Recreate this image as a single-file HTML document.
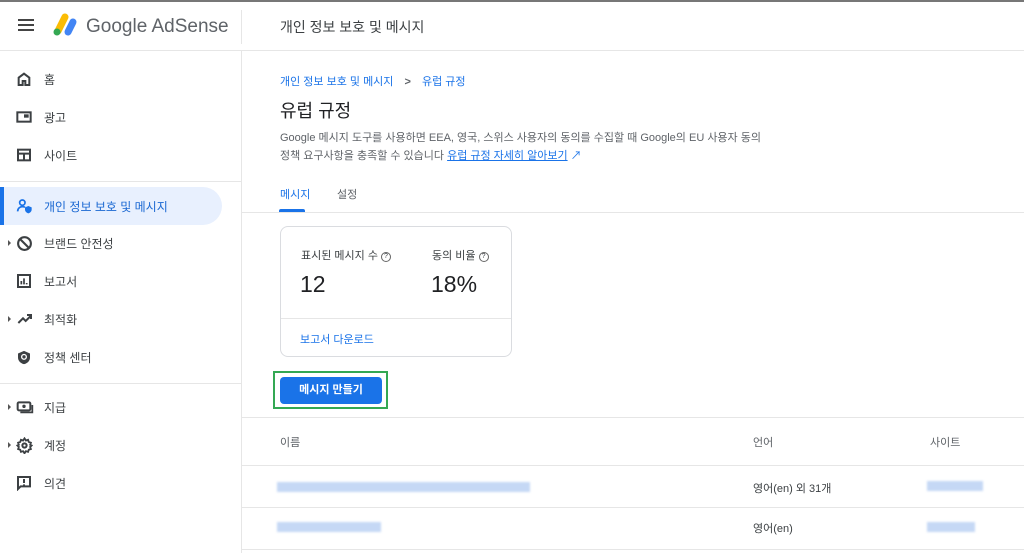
<!DOCTYPE html>
<html><head><meta charset="utf-8"><style>
*{box-sizing:border-box;margin:0;padding:0}
body{width:1024px;height:553px;overflow:hidden;background:#fff;font-family:"Liberation Sans","Noto Sans CJK KR",sans-serif;color:#3c4043;position:relative}
.abs{position:absolute}
.top{left:0;top:0;width:1024px;height:51px;border-top:2px solid #777;border-bottom:1px solid #e6e6e6;background:#fff}
.side{left:0;top:51px;width:242px;height:502px;border-right:1px solid #e6e6e6;background:#fff}
.nav{position:absolute;left:0;width:242px;height:36px;display:flex;align-items:center;font-size:12px;color:#3c4043}
.nav svg{position:absolute;left:16px}
.nav span{position:absolute;left:44px}
.caret{position:absolute;left:8px;width:0;height:0;border-left:3px solid #555;border-top:3px solid transparent;border-bottom:3px solid transparent}
.hr{position:absolute;left:0;width:241px;height:1px;background:#e6e6e6}
.main{left:242px;top:51px;width:782px;height:502px;background:#fff}
.link{color:#1a73e8}
.card{left:280px;top:226px;width:232px;height:131px;border:1px solid #dadce0;border-radius:8px;background:#fff}
.q{display:inline-block;width:10px;height:10px;border:1px solid #666;border-radius:50%;font-size:7px;line-height:8px;text-align:center;vertical-align:1px;margin-left:3px}
.line{position:absolute;left:242px;width:782px;height:1px;background:#e6e6e6}
.blur{position:absolute;height:10px;background:#c5d8f5;filter:blur(1px)}
</style></head><body>
<div class="abs top">
 <svg class="abs" style="left:18px;top:17px" width="16" height="12"><rect y="0" width="16" height="2" fill="#444"/><rect y="5" width="16" height="2" fill="#444"/><rect y="10" width="16" height="2" fill="#444"/></svg>
 <svg class="abs" style="left:51px;top:11px" width="28" height="24"><line x1="14" y1="4" x2="7" y2="18" stroke="#fbbc04" stroke-width="7" stroke-linecap="round"/><line x1="22" y1="9" x2="17" y2="19" stroke="#4285f4" stroke-width="7" stroke-linecap="round"/><circle cx="6" cy="19" r="3.5" fill="#34a853"/></svg>
 <div class="abs" style="left:86px;top:14px;font-size:19px;color:#5f6368">Google AdSense</div>
 <div class="abs" style="left:241px;top:8px;width:1px;height:34px;background:#e6e6e6"></div>
 <div class="abs" style="left:280px;top:15px;font-size:14px;color:#3c4043">개인 정보 보호 및 메시지</div>
</div>
<div class="abs side">
 <div class="nav" style="top:10px"><svg width="16" height="16" viewBox="0 0 24 24"><path d="M4 21V10l8-6 8 6v11h-6v-6h-4v6z" fill="none" stroke="#3c4043" stroke-width="3"/></svg><span>홈</span></div>
 <div class="nav" style="top:48px"><svg width="16" height="16" viewBox="0 0 24 24"><rect x="2" y="5" width="20" height="14" fill="none" stroke="#3c4043" stroke-width="3"/><rect x="12" y="8" width="7" height="5" fill="#3c4043"/></svg><span>광고</span></div>
 <div class="nav" style="top:86px"><svg width="16" height="16" viewBox="0 0 24 24"><rect x="3" y="4" width="18" height="16" fill="none" stroke="#3c4043" stroke-width="3"/><path d="M3 10h18M12 10v10" stroke="#3c4043" stroke-width="3"/></svg><span>사이트</span></div>
 <div class="hr" style="top:130px"></div>
 <div class="abs" style="left:0;top:136px;width:222px;height:38px;background:#e8f0fe;border-radius:0 19px 19px 0;border-left:4px solid #1a73e8"></div>
 <div class="nav" style="top:137px;color:#1a73e8"><svg width="18" height="16" viewBox="0 0 26 24"><circle cx="9" cy="7" r="4" fill="none" stroke="#1a73e8" stroke-width="2.6"/><path d="M2 20c0-5 4-7 7-7 2 0 3 .3 4 1" fill="none" stroke="#1a73e8" stroke-width="2.6"/><path d="M18 12l5 2v3c0 3-2 5-5 6-3-1-5-3-5-6v-3z" fill="#1a73e8"/></svg><span style="color:#1967d2">개인 정보 보호 및 메시지</span></div>
 <div class="nav" style="top:174px"><i class="caret"></i><svg width="17" height="17" viewBox="0 0 24 24"><circle cx="12" cy="12" r="9" fill="none" stroke="#3c4043" stroke-width="3"/><path d="M6 6l12 12" stroke="#3c4043" stroke-width="3"/></svg><span>브랜드 안전성</span></div>
 <div class="nav" style="top:212px"><svg width="16" height="16" viewBox="0 0 24 24"><rect x="3" y="3" width="18" height="18" fill="none" stroke="#3c4043" stroke-width="3"/><path d="M8 17v-5M12 17V8M16 17v-2" stroke="#3c4043" stroke-width="2.6"/></svg><span>보고서</span></div>
 <div class="nav" style="top:250px"><i class="caret"></i><svg width="18" height="16" viewBox="0 0 24 24"><path d="M2 18l7-7 4 4 8-8M15 6h6v6" fill="none" stroke="#3c4043" stroke-width="3"/></svg><span>최적화</span></div>
 <div class="nav" style="top:288px"><svg width="16" height="17" viewBox="0 0 24 24"><path d="M12 2l9 4v6c0 5-4 9-9 10-5-1-9-5-9-10V6z" fill="#3c4043"/><circle cx="12" cy="11" r="3.5" fill="none" stroke="#fff" stroke-width="2"/></svg><span>정책 센터</span></div>
 <div class="hr" style="top:332px"></div>
 <div class="nav" style="top:338px"><i class="caret"></i><svg width="18" height="16" viewBox="0 0 26 24"><rect x="2" y="5" width="19" height="12" rx="2" fill="none" stroke="#3c4043" stroke-width="3"/><circle cx="11.5" cy="11" r="2.5" fill="#3c4043"/><path d="M6 20h18V9" fill="none" stroke="#3c4043" stroke-width="2.6"/></svg><span>지급</span></div>
 <div class="nav" style="top:376px"><i class="caret"></i><svg width="17" height="17" viewBox="0 0 24 24"><circle cx="12" cy="12" r="3" fill="none" stroke="#3c4043" stroke-width="2.8"/><path d="M12 2l2 3 3-1 1 3 3 1-1 3 2 1-2 2 1 3-3 1-1 3-3-1-2 3-2-3-3 1-1-3-3-1 1-3-2-2 2-1-1-3 3-1 1-3 3 1z" fill="none" stroke="#3c4043" stroke-width="2.6"/></svg><span>계정</span></div>
 <div class="nav" style="top:414px"><svg width="16" height="16" viewBox="0 0 24 24"><path d="M3 3h18v14H7l-4 4z" fill="none" stroke="#3c4043" stroke-width="3"/><path d="M12 6v6M12 14v2" stroke="#3c4043" stroke-width="3"/></svg><span>의견</span></div>
</div>
<div class="abs main"></div>
<div class="abs link" style="left:280px;top:73px;font-size:11px">개인 정보 보호 및 메시지 <span style="color:#5f6368;margin:0 8px;font-weight:bold">&gt;</span> 유럽 규정</div>
<div class="abs" style="left:280px;top:97px;font-size:18px;color:#202124">유럽 규정</div>
<div class="abs" style="left:280px;top:129px;font-size:11px;line-height:18px;color:#5f6368;width:520px">Google 메시지 도구를 사용하면 EEA, 영국, 스위스 사용자의 동의를 수집할 때 Google의 EU 사용자 동의<br>정책 요구사항을 충족할 수 있습니다 <span class="link" style="text-decoration:underline">유럽 규정 자세히 알아보기</span> <span class="link">↗</span></div>
<div class="abs link" style="left:280px;top:186px;font-size:11px">메시지</div>
<div class="abs" style="left:337px;top:186px;font-size:11px;color:#5f6368">설정</div>
<div class="abs" style="left:279px;top:209px;width:26px;height:3px;background:#1a73e8;border-radius:2px 2px 0 0"></div>
<div class="line" style="top:212px"></div>
<div class="abs card">
 <div class="abs" style="left:20px;top:20px;font-size:11px">표시된 메시지 수<span class="q">?</span></div>
 <div class="abs" style="left:151px;top:20px;font-size:11px">동의 비율<span class="q">?</span></div>
 <div class="abs" style="left:19px;top:44px;font-size:23px;color:#202124">12</div>
 <div class="abs" style="left:150px;top:44px;font-size:23px;color:#202124">18%</div>
 <div class="abs" style="left:0;top:91px;width:230px;height:1px;background:#e6e6e6"></div>
 <div class="abs link" style="left:19px;top:104px;font-size:11px">보고서 다운로드</div>
</div>
<div class="abs" style="left:273px;top:371px;width:115px;height:38px;border:2px solid #34a853"></div>
<div class="abs" style="left:280px;top:377px;width:102px;height:27px;background:#1a73e8;border-radius:4px;color:#fff;font-size:11px;font-weight:bold;text-align:center;line-height:27px">메시지 만들기</div>
<div class="line" style="top:417px"></div>
<div class="abs" style="left:280px;top:434px;font-size:11px;color:#5f6368">이름</div>
<div class="abs" style="left:753px;top:434px;font-size:11px;color:#5f6368">언어</div>
<div class="abs" style="left:930px;top:434px;font-size:11px;color:#5f6368">사이트</div>
<div class="line" style="top:465px"></div>
<div class="blur" style="left:277px;top:482px;width:253px"></div>
<div class="abs" style="left:753px;top:480px;font-size:11px">영어(en) 외 31개</div>
<div class="blur" style="left:927px;top:481px;width:56px"></div>
<div class="line" style="top:507px"></div>
<div class="blur" style="left:277px;top:522px;width:104px"></div>
<div class="abs" style="left:753px;top:520px;font-size:11px">영어(en)</div>
<div class="blur" style="left:927px;top:522px;width:48px"></div>
<div class="line" style="top:549px"></div>
</body></html>
